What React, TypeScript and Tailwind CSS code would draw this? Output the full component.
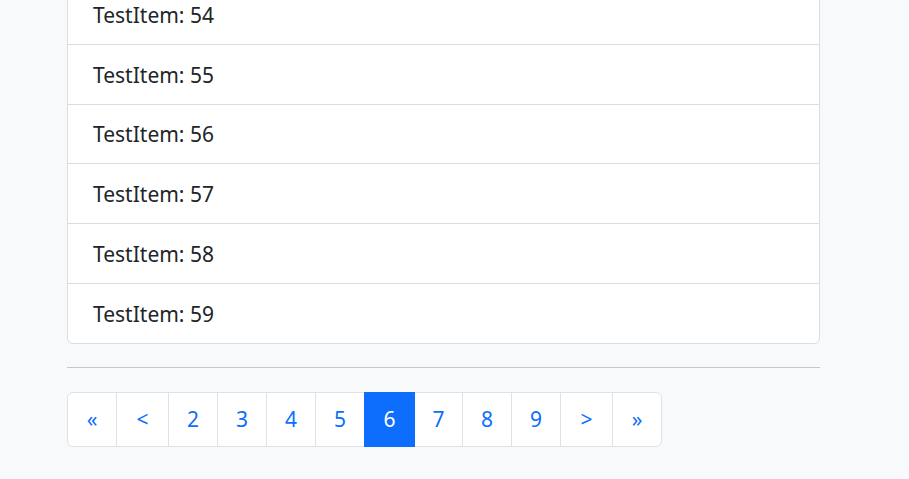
import React from "react";

const items = [
  { n: 54, h: "h-[59px]" },
  { n: 55, h: "h-[60px]" },
  { n: 56, h: "h-[59px]" },
  { n: 57, h: "h-[60px]" },
  { n: 58, h: "h-[60px]" },
  { n: 59, h: "h-[60px]" },
];
const pages: { label: string; w: number; active?: boolean }[] = [
  { label: "«", w: 50 },
  { label: "<", w: 53 },
  { label: "2", w: 50 },
  { label: "3", w: 50 },
  { label: "4", w: 50 },
  { label: "5", w: 50 },
  { label: "6", w: 51, active: true },
  { label: "7", w: 49 },
  { label: "8", w: 50 },
  { label: "9", w: 50 },
  { label: ">", w: 53 },
  { label: "»", w: 50 },
];

export default function App() {
  return (
    <div
      className="w-[909px] h-[479px] overflow-hidden bg-[#f8f9fa] text-[#212529]"
      style={{ fontFamily: '"Noto Sans", "Open Sans", sans-serif' }}
    >
      <div className="ml-[67px] w-[753px] -mt-[16px]">
        <div className="bg-white border border-[#dcdde0] rounded-[6px] overflow-hidden">
          {items.map((it, i) => (
            <div
              key={it.n}
              className={`${it.h} flex items-center pl-[25px] pt-[2px] text-[21px] ${
                i > 0 ? "border-t border-[#dcdde0]" : ""
              }`}
            >
              TestItem: {it.n}
            </div>
          ))}
        </div>
        <div className="mt-[23px] h-px bg-[#c6c7c8]" />
        <div className="mt-[24px] flex">
          {pages.map((p, i) => (
            <div
              key={i}
              style={{ width: p.w }}
              className={`h-[55px] flex items-center justify-center text-[21px] border ${
                i > 0 ? "-ml-px" : "rounded-l-[6px]"
              } ${i === pages.length - 1 ? "rounded-r-[6px]" : ""} ${
                p.active
                  ? "bg-[#0d6efd] border-[#0d6efd] text-white relative z-10"
                  : "bg-white border-[#dee2e6] text-[#0d6efd]"
              }`}
            >
              {p.label}
            </div>
          ))}
        </div>
      </div>
    </div>
  );
}
